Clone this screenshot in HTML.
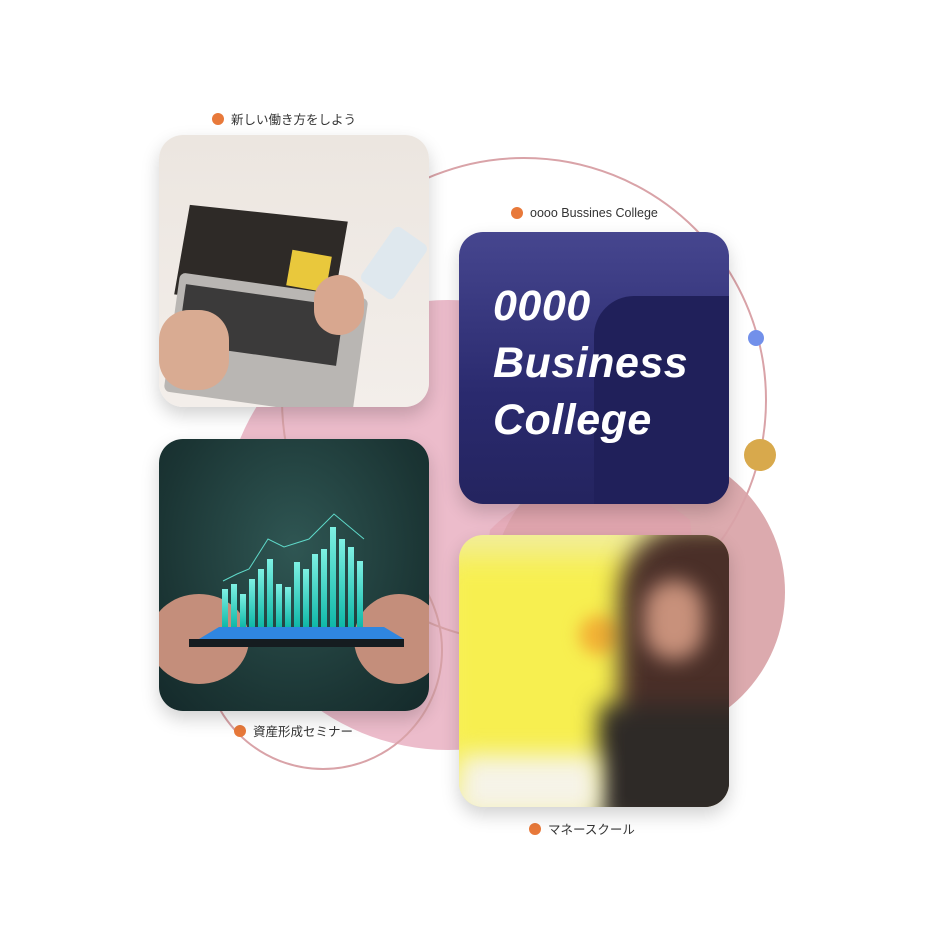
<!DOCTYPE html>
<html><head><meta charset="utf-8"><style>
body{margin:0;width:944px;height:944px;background:#fff;position:relative;overflow:hidden;font-family:"Liberation Sans","Noto Sans CJK JP",sans-serif}
.card{position:absolute;width:270px;height:272px;border-radius:24px;overflow:hidden;box-shadow:0 8px 18px rgba(0,0,0,.18)}
.lbl{position:absolute;font-size:12.5px;color:#333;display:flex;align-items:center;white-space:nowrap}
.lbl i{display:inline-block;width:12px;height:12px;border-radius:50%;background:#e8793a;margin-right:7px}
</style></head><body>
<svg width="944" height="944" style="position:absolute;left:0;top:0">
<circle cx="448" cy="525" r="225" fill="#ecbccb"/>
<circle cx="638" cy="592" r="147" fill="#dcaaae"/>
<path d="M490 530 A147 147 0 0 1 690 520 L700 620 L480 620Z" fill="#e39fae" opacity=".5"/>
<circle cx="524" cy="400" r="242" fill="none" stroke="#d9a3a8" stroke-width="2"/>
<circle cx="323" cy="650" r="119" fill="none" stroke="#d9a3a8" stroke-width="2"/>
<circle cx="756" cy="338" r="8" fill="#7290ea"/>
<circle cx="760" cy="455" r="16" fill="#d8a94c"/>
</svg>
<div class="lbl" style="left:212px;top:109px"><i></i>新しい働き方をしよう</div>
<div class="lbl" style="left:511px;top:206px"><i></i>oooo Bussines College</div>
<div class="lbl" style="left:234px;top:721px"><i></i>資産形成セミナー</div>
<div class="lbl" style="left:529px;top:819px"><i></i>マネースクール</div>

<div class="card" style="left:159px;top:135px;background:linear-gradient(180deg,#ece6e0,#f3eeea)">
<div style="position:absolute;left:22px;top:78px;width:160px;height:90px;background:#2e2a27;transform:skewX(-4deg) rotate(6deg)"></div>
<div style="position:absolute;left:12px;top:150px;width:190px;height:120px;background:#b9b6b3;transform:rotate(8deg);border-radius:6px"></div>
<div style="position:absolute;left:22px;top:160px;width:160px;height:60px;background:#3b3a3a;transform:rotate(8deg)"></div>
<div style="position:absolute;left:130px;top:118px;width:40px;height:36px;background:#e9c83c;transform:rotate(10deg)"></div>
<div style="position:absolute;left:215px;top:95px;width:40px;height:66px;background:#dfe8ee;border-radius:6px;transform:rotate(35deg)"></div>
<div style="position:absolute;left:0;top:175px;width:70px;height:80px;background:#d9ab92;border-radius:30px"></div>
<div style="position:absolute;left:155px;top:140px;width:50px;height:60px;background:#d8a78f;border-radius:25px"></div>
</div>

<div class="card" style="left:159px;top:439px;background:radial-gradient(ellipse at 50% 40%,#2f5653,#1b3534 70%,#14292a)">
<svg width="270" height="272" style="position:absolute;left:0;top:0">
<defs><linearGradient id="b" x1="0" y1="0" x2="0" y2="1"><stop offset="0" stop-color="#7ef0e3"/><stop offset="1" stop-color="#0fb8a8"/></linearGradient></defs>
<ellipse cx="40" cy="200" rx="50" ry="45" fill="#c48e7b"/><ellipse cx="240" cy="200" rx="45" ry="45" fill="#c48e7b"/>
<polygon points="60,188 225,188 245,200 40,200" fill="#2f86e0"/>
<rect x="30" y="200" width="215" height="8" fill="#151c20"/>
<g fill="url(#b)">
<rect x="63" y="150" width="6" height="38"/><rect x="72" y="145" width="6" height="43"/><rect x="81" y="155" width="6" height="33"/><rect x="90" y="140" width="6" height="48"/><rect x="99" y="130" width="6" height="58"/><rect x="108" y="120" width="6" height="68"/><rect x="117" y="145" width="6" height="43"/><rect x="126" y="148" width="6" height="40"/><rect x="135" y="123" width="6" height="65"/><rect x="144" y="130" width="6" height="58"/><rect x="153" y="115" width="6" height="73"/><rect x="162" y="110" width="6" height="78"/><rect x="171" y="88" width="6" height="100"/><rect x="180" y="100" width="6" height="88"/><rect x="189" y="108" width="6" height="80"/><rect x="198" y="122" width="6" height="66"/>
</g>
<polyline points="64,142 78,135 90,130 109,100 125,108 150,100 175,75 205,100" fill="none" stroke="#5fd9c9" stroke-width="1"/>
</svg></div>

<div class="card" style="left:459px;top:232px;background:linear-gradient(180deg,#46468f,#2a2a6e 60%,#24245f)">
<div style="position:absolute;left:135px;top:64px;width:140px;height:220px;background:#20205a;border-top-left-radius:40px"></div>
<div style="position:absolute;left:34px;top:46px;color:#fff;font-family:'Liberation Sans',sans-serif;font-weight:bold;font-style:italic;font-size:43px;line-height:57px;letter-spacing:0.5px">0000<br>Business<br>College</div>
</div>

<div class="card" style="left:459px;top:535px;background:#f2ee9a">
<div style="position:absolute;left:-20px;top:20px;width:200px;height:230px;background:#f7ef50;filter:blur(14px)"></div>
<div style="position:absolute;left:120px;top:80px;width:40px;height:40px;background:#f2b235;border-radius:50%;filter:blur(8px)"></div>
<div style="position:absolute;left:160px;top:-10px;width:140px;height:300px;background:#4a2f28;border-radius:70px 0 0 0;filter:blur(12px)"></div>
<div style="position:absolute;left:185px;top:45px;width:60px;height:80px;background:#c8917b;border-radius:30px;filter:blur(10px)"></div>
<div style="position:absolute;left:140px;top:170px;width:160px;height:120px;background:#2e2a27;filter:blur(12px)"></div>
<div style="position:absolute;left:0;top:220px;width:140px;height:60px;background:#f6f3e8;filter:blur(12px)"></div>
</div>
</body></html>
